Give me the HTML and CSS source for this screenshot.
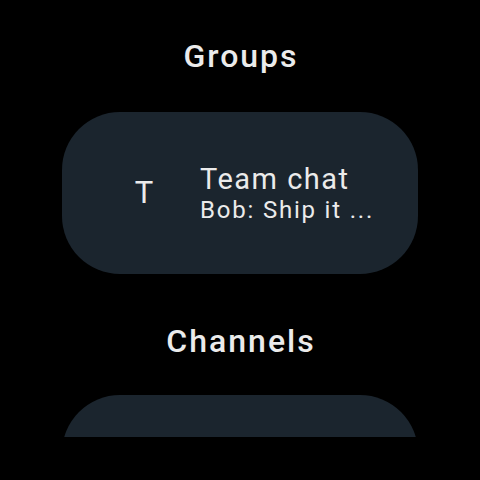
FILE: index.html
```html
<!DOCTYPE html>
<html>
<head>
<meta charset="utf-8">
<link rel="stylesheet" href="styles.css">
</head>
<body>
<div class="screen">
  <div class="list">
    <h2 class="heading">Groups</h2>
    <div class="card card-first">
      <div class="avatar">T</div>
      <div class="texts">
        <div class="title">Team chat</div>
        <div class="subtitle">Bob: Ship it ...</div>
      </div>
    </div>
    <h2 class="heading heading-2">Channels</h2>
    <div class="card card-second"></div>
  </div>
</div>
</body>
</html>
```
FILE: styles.css
```css
html, body {
  margin: 0;
  padding: 0;
  background: #000;
}
.screen {
  width: 480px;
  height: 437px;
  overflow: hidden;
  font-family: Roboto, "Noto Sans", sans-serif;
  color: #ebebeb;
}
.list {
  width: 356px;
  margin: 0 auto;
  display: flex;
  flex-direction: column;
  align-items: stretch;
  padding-top: 36px;
}
.heading {
  margin: 0;
  font-size: 32px;
  font-weight: 500;
  line-height: 40px;
  text-align: center;
  letter-spacing: 2px;
  text-indent: 2px;
}
.heading-2 {
  margin-top: 47px;
}
.card {
  height: 162px;
  flex-shrink: 0;
  border-radius: 58px;
  background: #1b252e;
  display: flex;
  align-items: center;
  box-sizing: border-box;
  padding-left: 62px;
}
.card-first {
  margin-top: 36px;
}
.card-second {
  margin-top: 34px;
}
.avatar {
  width: 40px;
  font-size: 31px;
  line-height: 36px;
  font-weight: 400;
  text-align: center;
}
.texts {
  margin-left: 36px;
  display: flex;
  flex-direction: column;
}
.title {
  font-size: 29px;
  line-height: 34px;
  letter-spacing: 1.5px;
}
.subtitle {
  font-size: 24px;
  line-height: 28px;
  letter-spacing: 1.8px;
}
```
